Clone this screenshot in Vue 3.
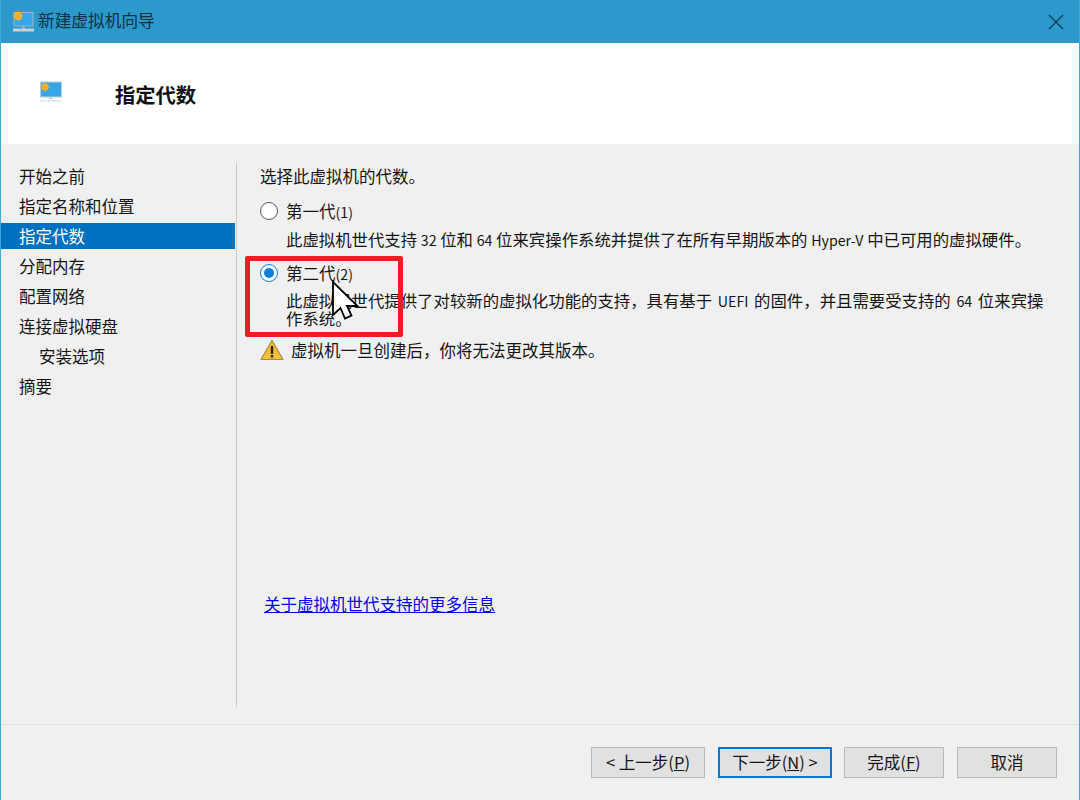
<script setup>
const steps = [
  { label: '开始之前' },
  { label: '指定名称和位置' },
  { label: '指定代数', active: true },
  { label: '分配内存' },
  { label: '配置网络' },
  { label: '连接虚拟硬盘' },
  { label: '安装选项', sub: true },
  { label: '摘要' }
]
</script>

<template>
  <div class="window">
    <div class="titlebar">
      <svg class="title-icon" width="24" height="24" viewBox="0 0 24 24">
        <rect x="3" y="2.500" width="19" height="13.500" fill="#35a7e6" stroke="#9fb6c6" stroke-width="1"/>
        <circle cx="7" cy="6" r="4" fill="#f5b93a"/>
        <path d="M7 0.500V11.500M1.500 6H12.500M3 2L11 10M11 2L3 10" stroke="#f0a92b" stroke-width="1"/>
        <rect x="11" y="16.500" width="3" height="2" fill="#9fb6c6"/>
        <rect x="2" y="18.500" width="21" height="3" fill="#c6d3dc"/>
      </svg>
      <span class="title-text">新建虚拟机向导</span>
      <svg class="close" width="16" height="16" viewBox="0 0 16 16">
        <path d="M1 1L15 15M15 1L1 15" stroke="#10384f" stroke-width="1.200" fill="none"/>
      </svg>
    </div>

    <div class="header">
      <svg class="header-icon" width="24" height="24" viewBox="0 0 24 24">
        <rect x="1.500" y="2" width="21" height="15" fill="#35a7e6" stroke="#bcd0dc" stroke-width="1"/>
        <circle cx="6" cy="7" r="3.500" fill="#f5b93a"/>
        <path d="M6 2V12M1 7H11M2.500 3.500L9.500 10.500M9.500 3.500L2.500 10.500" stroke="#f0a92b" stroke-width="1"/>
        <rect x="10" y="17" width="3" height="2" fill="#c3d0d8"/>
        <rect x="1" y="20" width="21" height="1.500" fill="#dfe5e9"/>
      </svg>
      <h1 class="header-title">指定代数</h1>
    </div>

    <div class="body">
      <nav class="steps">
        <div
          v-for="s in steps"
          :key="s.label"
          class="step"
          :class="{ active: s.active, sub: s.sub }"
        >{{ s.label }}</div>
      </nav>

      <main class="content">
        <p class="lead">选择此虚拟机的代数。</p>

        <div class="option first">
          <span class="radio"></span>
          <span>第一代<span class="lat">(1)</span></span>
        </div>
        <p class="desc one">此虚拟机世代支持 <span class="lat">32</span> 位和 <span class="lat">64</span> 位来宾操作系统并提供了在所有早期版本的 <span class="lat">Hyper-V</span> 中已可用的虚拟硬件。</p>

        <div class="option second">
          <span class="radio checked"></span>
          <span>第二代<span class="lat">(2)</span></span>
        </div>
        <p class="desc two">此虚拟机世代提供了对较新的虚拟化功能的支持，具有基于 <span class="lat">UEFI</span> 的固件，并且需要受支持的 <span class="lat">64</span> 位来宾操作系统。</p>

        <div class="warning">
          <svg width="24" height="22" viewBox="0 0 24 22">
            <path d="M12 1.500L23 20.500H1Z" fill="#f3bf3f" stroke="#b58a2e" stroke-width="1.200" stroke-linejoin="round"/>
            <rect x="10.800" y="7" width="2.400" height="8" fill="#2e2206"/>
            <rect x="10.800" y="16" width="2.400" height="2.500" fill="#2e2206"/>
          </svg>
          <span>虚拟机一旦创建后，你将无法更改其版本。</span>
        </div>

        <div class="spacer"></div>
        <a class="link" href="#">关于虚拟机世代支持的更多信息</a>
      </main>
    </div>

    <div class="footer">
      <button class="btn wide">&lt; 上一步(<u>P</u>)</button>
      <button class="btn wide primary">下一步(<u>N</u>) &gt;</button>
      <button class="btn">完成(<u>F</u>)</button>
      <button class="btn">取消</button>
    </div>

    <div class="highlight"></div>
    <svg class="cursor" width="30" height="42" viewBox="0 0 30 42">
      <path d="M2 2V35L9.500 28L14 38.500L20.500 35.500L16 26H26.500Z" fill="#fff" stroke="#000" stroke-width="1.800" stroke-linejoin="miter"/>
    </svg>
  </div>
</template>

<style>
html, body { margin: 0; padding: 0; background: #fff; }
</style>

<style scoped>
.window {
  position: relative;
  width: 1080px;
  height: 800px;
  box-sizing: border-box;
  display: flex;
  flex-direction: column;
  background: #f0f0f0;
  border-left: 1px solid #3fa9d6;
  border-right: 1px solid #3fa9d6;
  font-family: "Noto Sans CJK SC", "Liberation Sans", sans-serif;
  font-size: 16.500px;
  color: #141414;
  overflow: hidden;
}
.lat { font-size: 14.200px; }
.titlebar {
  height: 43px;
  margin: 0 -1px;
  flex: none;
  display: flex;
  align-items: center;
  padding-left: 11px;
  background: #2b99cb;
  color: #10303f;
}
.title-icon { flex: none; margin-right: 3px; }
.title-text {
  font-size: 16.700px;
  line-height: 22px;
  margin-top: -3px;
}
.close { margin-left: auto; margin-right: 16px; }
.header {
  height: 101px;
  flex: none;
  display: flex;
  align-items: center;
  background: #fff;
  padding-left: 38px;
}
.header-icon { flex: none; margin-right: 52px; margin-top: -4px; }
.header-title {
  margin: 1px 0 0;
  font-size: 20.300px;
  line-height: 28px;
  font-weight: 700;
  color: #111;
}
.body {
  flex: 1;
  min-height: 0;
  display: flex;
  padding-top: 19px;
}
.steps {
  width: 234px;
  height: 544px;
  box-sizing: border-box;
  flex: none;
}
.step {
  height: 26px;
  line-height: 26px;
  margin-bottom: 4px;
  padding-left: 18px;
  white-space: nowrap;
}
.step.sub { padding-left: 38px; }
.step.active { background: #0070c0; color: #fff; }
.content {
  flex: 1;
  height: 544px;
  margin-left: 1px;
  box-sizing: border-box;
  border-left: 1px solid #c9c9c9;
  padding-left: 23px;
  padding-right: 30px;
  display: flex;
  flex-direction: column;
}
.lead { margin: 1px 0 0; line-height: 24px; }
.option {
  display: flex;
  align-items: center;
  gap: 8px;
  height: 22px;
  line-height: 22px;
}
.option.first { margin-top: 12px; }
.option.second { margin-top: 13px; }
.radio {
  width: 18px;
  height: 18px;
  box-sizing: border-box;
  border-radius: 50%;
  border: 1.500px solid #5a5a5a;
  background: #fff;
  flex: none;
  position: relative;
}
.radio.checked { border-color: #0a7fd9; }
.radio.checked::after {
  content: "";
  position: absolute;
  inset: 3px;
  border-radius: 50%;
  background: #0a7fd9;
}
.desc {
  margin: 0 0 0 26px;
  font-size: 16.400px;
  line-height: 17px;
}
.desc.one { margin-top: 9px; }
.desc.two { margin-top: 8px; word-spacing: 2px; }
.warning {
  display: flex;
  align-items: center;
  gap: 7px;
  margin-top: 11px;
  height: 24px;
}
.spacer { flex: 1; max-height: 230px; }
.link {
  color: #0000ee;
  text-decoration: underline;
  margin-left: 4px;
  line-height: 24px;
  align-self: flex-start;
}
.footer {
  flex: none;
  height: 76px;
  box-sizing: border-box;
  border-top: 1px solid #dfdfdf;
  display: flex;
  align-items: flex-start;
  justify-content: flex-end;
  padding-top: 22px;
  padding-right: 22px;
  gap: 13px;
}
.btn {
  width: 100px;
  height: 31px;
  box-sizing: border-box;
  border: 1.500px solid #b8b8b8;
  background: #e1e1e1;
  color: #141414;
  font-family: inherit;
  font-size: 16.500px;
  line-height: 1;
  padding: 0;
}
.btn.wide { width: 114px; }
.btn.primary { border: 2px solid #0078d7; margin-right: -1px; }
.highlight {
  position: absolute;
  left: 244px;
  top: 256px;
  width: 158px;
  height: 81px;
  box-sizing: border-box;
  border: 5px solid #ee1c25;
  border-radius: 2px;
}
.cursor {
  position: absolute;
  left: 330px;
  top: 280px;
}
</style>
